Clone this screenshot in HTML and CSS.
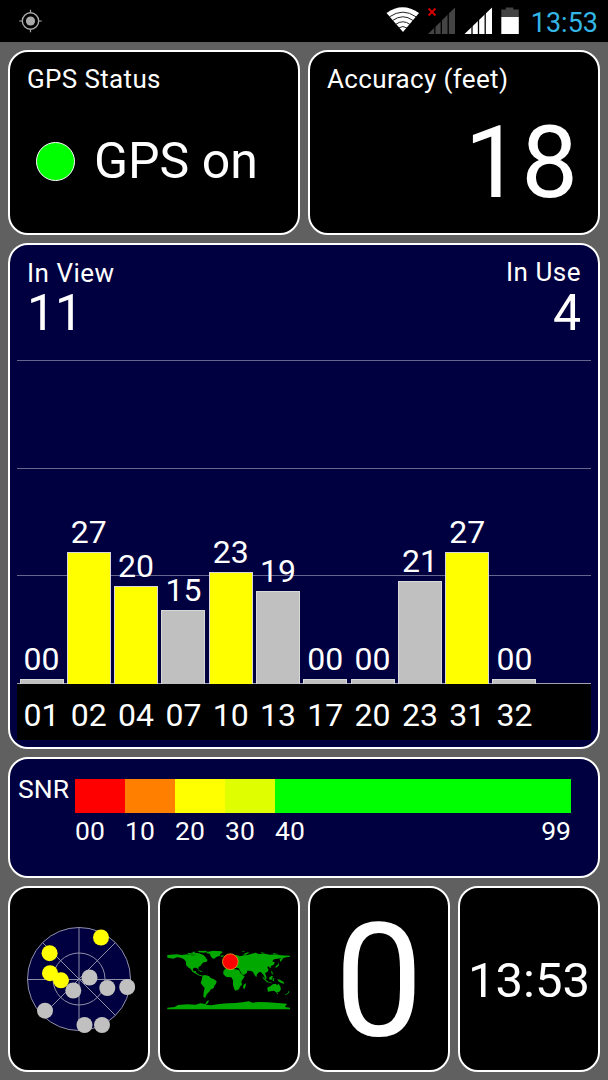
FILE: index.html
```html
<!DOCTYPE html>
<html lang="en">
<head>
    <meta charset="UTF-8">
    <meta name="viewport" content="width=device-width, initial-scale=1.0">
    <title>GPS Status</title>
    <link rel="stylesheet" href="styles.css">
</head>
<body>

<div id="status-bar">
    <svg class="gps-icon" width="24" height="24" viewBox="0 0 24 24">
        <circle cx="11.5" cy="12" r="8.2" fill="none" stroke="#aaa" stroke-width="1.4"/>
        <circle cx="11.5" cy="12" r="4.6" fill="#aaa"/>
        <path d="M11.500 0.700v3M11.500 20.300v3M0.200 12h3M19.800 12h3" stroke="#aaa" stroke-width="1.2"/>
    </svg>
    <svg class="system-icons" width="136" height="42" viewBox="0 0 136 42">
        <!-- wifi -->
        <path d="M0.500 13Q16.500 1.500 33 13L17 32Z" fill="#fff"/>
        <path d="M3.500 16.800Q17 7.500 30 16.800M6.500 20.500Q17 13 27 20.500M9.500 24.500Q17 19 24 24.500M12.500 28Q17 25 21 28" fill="none" stroke="#222" stroke-width="1"/>
        <!-- no service -->
        <path d="M42 34L69 7.500V34Z" fill="#444"/>
        <path d="M48.800 20v14M55.300 15v19M62.200 10v24" stroke="#000" stroke-width="1.300"/>
        <path d="M42.500 8.500l7 7M49.500 8.500l-7 7" stroke="#d00000" stroke-width="2"/>
        <!-- signal -->
        <path d="M78.500 34L106 7.500V34Z" fill="#fff"/>
        <path d="M86 20v14M92.500 15v19M99.200 10v24" stroke="#000" stroke-width="1.300"/>
        <!-- battery -->
        <path d="M115.300 9.500h4.500V7.500h7.500v2h5.500V17h-17.500z" fill="#444"/>
        <path d="M115.300 17h17.500v17h-17.500z" fill="#fff"/>
    </svg>
    <span class="clock">13:53</span>
</div>

<div id="main">
    <div class="row top-row">
        <div class="card">
            <div class="title">GPS Status</div>
            <div class="gps-state"><span class="led"></span><span>GPS on</span></div>
        </div>
        <div class="card">
            <div class="title">Accuracy (feet)</div>
            <div class="accuracy">18</div>
        </div>
    </div>

    <div class="card blue chart-card">
        <div class="counts">
            <div>
                <div class="count-label">In View</div>
                <div class="count">11</div>
            </div>
            <div class="right">
                <div class="count-label">In Use</div>
                <div class="count">4</div>
            </div>
        </div>
        <div class="chart">
            <div class="bars">
                <div class="sat"><span>00</span><div class="bar" style="height: 5px"></div></div>
                <div class="sat used"><span>27</span><div class="bar" style="height: 132px"></div></div>
                <div class="sat used"><span>20</span><div class="bar" style="height: 98px"></div></div>
                <div class="sat"><span>15</span><div class="bar" style="height: 74px"></div></div>
                <div class="sat used"><span>23</span><div class="bar" style="height: 112px"></div></div>
                <div class="sat"><span>19</span><div class="bar" style="height: 93px"></div></div>
                <div class="sat"><span>00</span><div class="bar" style="height: 5px"></div></div>
                <div class="sat"><span>00</span><div class="bar" style="height: 5px"></div></div>
                <div class="sat"><span>21</span><div class="bar" style="height: 103px"></div></div>
                <div class="sat used"><span>27</span><div class="bar" style="height: 132px"></div></div>
                <div class="sat"><span>00</span><div class="bar" style="height: 5px"></div></div>
            </div>
        </div>
        <div class="axis">
            <span>01</span><span>02</span><span>04</span><span>07</span><span>10</span><span>13</span><span>17</span><span>20</span><span>23</span><span>31</span><span>32</span>
        </div>
    </div>

    <div class="card blue snr-card">
        <div class="snr-title">SNR</div>
        <div class="scale">
            <div class="step red">00</div>
            <div class="step orange">10</div>
            <div class="step yellow">20</div>
            <div class="step lime">30</div>
            <div class="step green"><span>40</span><span>99</span></div>
        </div>
    </div>

    <div class="row bottom-row">
        <div class="card center">
            <svg width="112" height="112" viewBox="23 923 112 112">
                <circle cx="79" cy="979" r="51.500" fill="#000040"/>
                <g fill="none" stroke="#8f8fa8" stroke-width="1">
                    <circle cx="79" cy="979" r="51.500"/>
                    <circle cx="79" cy="979" r="26"/>
                    <path d="M79 927.500v103M27.500 979.500h103M42.600 942.600l72.800 72.800M115.400 942.600l-72.800 72.800"/>
                </g>
                <g fill="#c0c0c0">
                    <circle cx="89.500" cy="977.500" r="8"/>
                    <circle cx="73.300" cy="990.500" r="8"/>
                    <circle cx="107.300" cy="988" r="8"/>
                    <circle cx="127.200" cy="987" r="8"/>
                    <circle cx="45" cy="1010.700" r="8"/>
                    <circle cx="84.500" cy="1025" r="8"/>
                    <circle cx="102" cy="1025" r="8"/>
                </g>
                <g fill="#ff0">
                    <circle cx="101" cy="937.500" r="8"/>
                    <circle cx="49.600" cy="953.200" r="8"/>
                    <circle cx="50" cy="973.200" r="8"/>
                    <circle cx="61" cy="980.300" r="8"/>
                </g>
            </svg>
        </div>
        <div class="card center">
            <svg class="world" width="124" height="62" viewBox="21 28 372 186">
                <g fill="#00a800">
                    <!-- north america -->
                    <path d="M22 46L50 44 66 46 80 44 95 47 112 46 122 43 132 48 137 55 143 61 140 66 131 68 126 72 122 78 116 82 115 91 111 85 103 84 98 88 101 95 107 94 108 98 113 102 119 106 127 107 124 110 115 107 105 101 97 96 92 88 84 83 78 76 78 66 72 59 62 54 51 53 40 57 22 54Z"/>
                    <path d="M82 40L97 41 100 38 108 40 117 41 129 46 139 54 132 55 120 48 103 45 86 45ZM112 34L137 33 143 36 132 39 118 38ZM92 37L106 36 103 39ZM113 91l10 2 6 3-7 0Z"/>
                    <path d="M144 36L160 33 185 35 187 39 181 43 180 48 171 51 162 57 157 56 152 50 149 42 137 40ZM181 48l9-1 2 3-8 2Z"/>
                    <!-- south america -->
                    <path d="M127 108L134 106 147 109 152 115 162 119 170 125 168 132 163 138 161 146 153 149 147 157 143 161 138 168 136 175 130 171 131 158 134 145 127 137 122 129 126 119Z"/>
                    <!-- europe and asia -->
                    <path d="M194 85L194 77 201 75 197 68 205 65 210 58 219 48 230 46 239 50 252 47 262 46 275 42 287 39 296 43 315 42 330 45 348 44 363 47 390 48 390 51 379 53 370 55 366 61 361 67 359 59 366 55 353 57 342 59 337 65 345 69 340 76 332 80 333 86 328 83 324 79 322 84 326 90 322 97 315 100 318 108 320 116 316 119 312 108 306 101 301 96 297 98 291 104 289 113 284 107 279 97 271 93 262 93 260 101 249 107 244 101 239 91 236 86 229 84 221 86 217 79 211 78 205 79 201 84Z"/>
                    <path d="M250 44l9-5 9-2-5 5-8 4ZM302 38l13 2-9 2ZM244 35h12l-6 2ZM338 40l15 2-12 1ZM347 80l7-6 1-7 2 9-5 6-6 3Z"/>
                    <!-- africa -->
                    <path d="M196 87L211 85 222 88 237 91 242 101 250 108 255 108 249 118 244 125 246 135 240 141 237 149 227 153 223 149 219 136 219 122 214 113 199 112 190 104 190 95ZM256 131l2 4-4 12-5-1 1-9Z"/>
                    <!-- oceania -->
                    <path d="M306 109l15 14 5 4-5 1-11-11ZM327 114l8-6 4 2-5 12-6-3ZM321 126l15 3-3 2-12-3ZM338 116l6-1-3 3 2 7-5-1ZM352 119l8 1 11 7 2 5-10-2-8-5ZM333 94l3 1 4 10-5-3Z"/>
                    <path d="M323 143L331 140 338 134 348 132 351 137 356 132 361 141 363 149 358 156 350 159 342 153 331 155 324 156 322 148ZM350 160l5 0-3 4ZM384 155l5 1-4 5-8 6-2-2 9-6Z"/>
                    <!-- antarctica -->
                    <path d="M22 204L44 202 54 196 81 194 107 195 121 191 136 193 141 184 147 182 144 190 137 195 154 197 177 193 204 191 226 190 247 188 267 185 277 189 294 187 324 188 353 190 381 192 375 202 390 204 390 209 22 209Z"/>
                </g>
                <circle cx="211" cy="66" r="23.500" fill="#f00" stroke="#e8a020" stroke-width="2.500"/>
            </svg>
        </div>
        <div class="card center speed">0</div>
        <div class="card center time">13:53</div>
    </div>
</div>

</body>
</html>
```
FILE: styles.css
```css
* {
    box-sizing: border-box;
}
body {
    font-family: Roboto, sans-serif;
    margin: 0;
    height: 1080px;
    background: #606060;
    color: white;
    overflow: hidden;
}
#status-bar {
    height: 42px;
    padding-left: 19px;
    padding-right: 10px;
    display: flex;
    align-items: center;
    background: black;
}
.system-icons {
    margin-left: auto;
}
.clock {
    width: 68px;
    margin-left: 8px;
    padding-top: 3px;
    font-size: 27px;
    line-height: 32px;
    text-align: right;
    color: #33b5e5;
}
#main {
    display: flex;
    flex-direction: column;
    gap: 8px;
    padding: 8px;
}
.row {
    display: flex;
    gap: 8px;
}
.card {
    flex: 1;
    border: 2px solid white;
    border-radius: 20px;
    background: black;
}
.blue {
    flex: none;
    background: #000040;
}
.top-row {
    height: 185px;
}
.title {
    padding: 11px 17px 0;
    font-size: 26px;
    line-height: 32px;
    letter-spacing: 0.35px;
}
.gps-state {
    display: flex;
    align-items: center;
    gap: 19px;
    padding: 36px 0 0 26px;
    font-size: 50px;
    line-height: 61px;
}
.led {
    width: 39px;
    height: 39px;
    border: 1px solid white;
    border-radius: 50%;
    background: #00ff00;
}
.accuracy {
    padding: 8px 20px 0 0;
    font-size: 101px;
    line-height: 120px;
    text-align: right;
}
.chart-card {
    height: 506px;
    padding: 0 7px;
}
.counts {
    display: flex;
    justify-content: space-between;
    height: 115px;
    padding: 12px 10px 0;
}
.right {
    text-align: right;
}
.count-label {
    font-size: 26px;
    line-height: 32px;
    letter-spacing: 0.5px;
}
.right .count-label {
    line-height: 30px;
    padding-bottom: 2px;
}
.count {
    font-size: 50px;
    line-height: 48px;
}
.chart {
    height: 324px;
    border-bottom: 1px solid #a0a0b0;
    background: repeating-linear-gradient(#66668c 0 1px, transparent 1px 107.700px);
}
.bars {
    display: flex;
    align-items: flex-end;
    gap: 3.300px;
    height: 324px;
    padding-left: 2.500px;
}
.sat {
    width: 44px;
    font-size: 32px;
    line-height: 40px;
    text-align: center;
}
.bar {
    border: 1px solid #d8d8d8;
    border-bottom: none;
    background: #c0c0c0;
}
.used .bar {
    background: #ffff00;
}
.axis {
    display: flex;
    gap: 3.300px;
    height: 56px;
    padding-left: 2.500px;
    background: black;
    font-size: 32px;
    line-height: 62px;
}
.axis span {
    width: 44px;
    text-align: center;
}
.snr-card {
    display: flex;
    height: 121px;
    padding: 20px 27px 0 8px;
    font-size: 26.500px;
}
.snr-title {
    width: 57px;
    line-height: 20px;
}
.scale {
    display: flex;
    flex: 1;
}
.step {
    width: 50px;
    line-height: 36px;
}
.step::before {
    content: "";
    display: block;
    width: 100%;
    height: 34px;
    background: currentColor;
}
.red::before {
    background: #ff0000;
}
.orange::before {
    background: #ff8000;
}
.yellow::before {
    background: #ffff00;
}
.lime::before {
    background: #dfff00;
}
.green {
    flex: 1;
    display: flex;
    flex-wrap: wrap;
    align-content: flex-start;
    justify-content: space-between;
}
.green::before {
    background: #00ff00;
}
.bottom-row {
    height: 186px;
}
.center {
    display: flex;
    align-items: center;
    justify-content: center;
}
.world {
    margin-top: 2px;
}
.speed {
    padding-top: 4px;
    font-size: 158px;
}
.time {
    padding-top: 2px;
    font-size: 49px;
}
```
